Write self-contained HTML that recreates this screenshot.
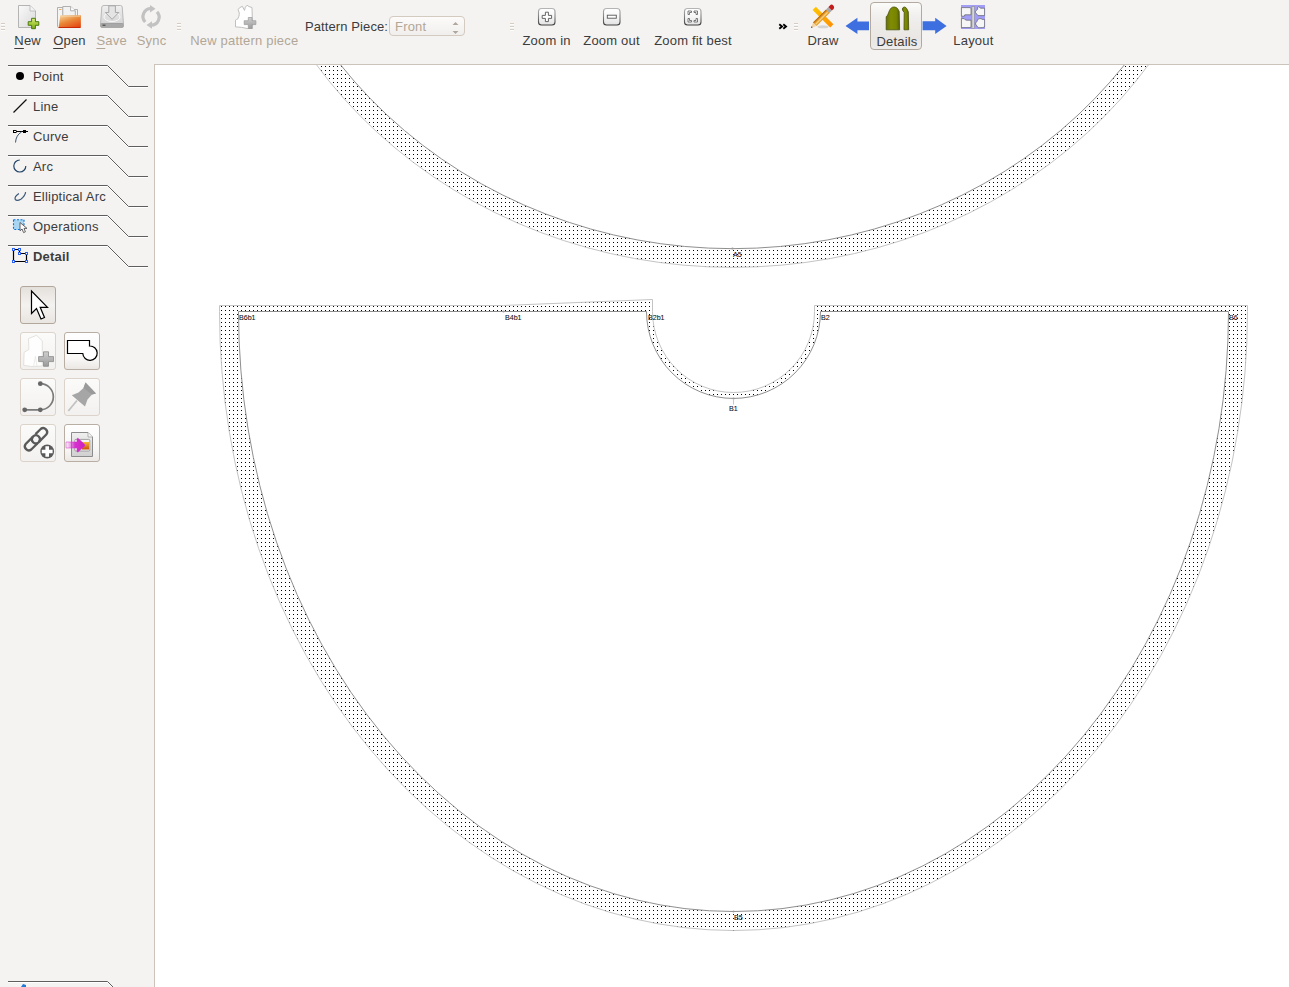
<!DOCTYPE html>
<html><head><meta charset="utf-8">
<style>
*{margin:0;padding:0;box-sizing:border-box}
html,body{width:1289px;height:987px;overflow:hidden;background:#f4f3f1;position:relative;font-family:"Liberation Sans",sans-serif;font-size:13px;color:#3c3c3c}
.a{position:absolute}
.t{position:absolute;white-space:nowrap;line-height:15px;height:15px;letter-spacing:0.2px}
.c{transform:translateX(-50%)}
.dis{color:#b2a696}
.u{text-decoration:underline;text-decoration-thickness:1px;text-underline-offset:3px}
.hd{position:absolute;width:4px;height:8px;background:repeating-linear-gradient(to bottom,#d5ccc2 0 1px,#fdfdfc 1px 2px,transparent 2px 3px)}
.tab{position:absolute;left:8px;width:141px;height:22px}
.tb{position:absolute;width:36px;height:38px;border:1px solid #c3b8ad;border-radius:3px;background:linear-gradient(#fcfcfb,#f1efed)}
</style></head><body>

<!-- canvas -->
<div class="a" style="left:154px;top:64px;width:1135px;height:923px;background:#fff;border-left:1px solid #ccc3ba;border-top:1px solid #ccc3ba"></div>
<svg class="a" style="left:155px;top:65px" width="1134" height="922" viewBox="155 65 1134 922">
<defs>
<pattern id="dots" patternUnits="userSpaceOnUse" x="0" y="0" width="4" height="4"><rect x="1" y="2" width="1" height="1" fill="#000"/></pattern>
</defs>
<g id="pieceA">
<path d="M230.2,-193.5 a502.3,460.7 0 1 0 1004.6,0 a502.3,460.7 0 1 0 -1004.6,0 Z M244,-207.5 a488.5,456 0 1 0 977,0 a488.5,456 0 1 0 -977,0 Z" fill="url(#dots)" fill-rule="evenodd" shape-rendering="crispEdges"/>
<path d="M230.2,-193.5 a502.3,460.7 0 1 0 1004.6,0 a502.3,460.7 0 1 0 -1004.6,0 Z" fill="none" stroke="#c4c4c4" stroke-width="1"/>
<path d="M244,-207.5 a488.5,456 0 1 0 977,0 a488.5,456 0 1 0 -977,0 Z" fill="none" stroke="#8f8f8f" stroke-width="1"/>
</g>
<g id="pieceB">
<path d="M219.5,305.5 L503.5,305.5 L652.5,299.5 L652.5,311.5 A81,81 0 0 0 814.5,311.5 L814.5,305.5 L1247.5,305.5 L1247.5,311.5 A514,619 0 0 1 733.5,930.5 A514,619 0 0 1 219.5,311.5 Z" fill="url(#dots)" shape-rendering="crispEdges"/>
<path d="M238.5,311.5 L646.5,311.5 A87,87 0 0 0 820.5,311.5 L1228.5,311.5 A495,600 0 0 1 733.5,911.5 A495,600 0 0 1 238.5,311.5 Z" fill="#fff" shape-rendering="crispEdges"/>
<path d="M219.5,305.5 L503.5,305.5 L652.5,299.5 L652.5,311.5 A81,81 0 0 0 814.5,311.5 L814.5,305.5 L1247.5,305.5 L1247.5,311.5 A514,619 0 0 1 733.5,930.5 A514,619 0 0 1 219.5,311.5 Z" fill="none" stroke="#c4c4c4" stroke-width="1"/>
<path d="M238.5,311.5 L646.5,311.5 A87,87 0 0 0 820.5,311.5 L1228.5,311.5 A495,600 0 0 1 733.5,911.5 A495,600 0 0 1 238.5,311.5 Z" fill="none" stroke="#8f8f8f" stroke-width="1"/>
</g>
<circle cx="732.5" cy="248.5" r="1.1" fill="#9a9a9a"/><circle cx="733.5" cy="911.5" r="1.1" fill="#9a9a9a"/><circle cx="733.5" cy="398.5" r="1.1" fill="#9a9a9a"/><circle cx="503.5" cy="311.5" r="1.1" fill="#9a9a9a"/>
<path d="M733.5,399 V404.5" stroke="#c8c8c8" stroke-width="1"/>
<g font-family="Liberation Sans" font-size="7.1" fill="#111" stroke="#111" stroke-width="0.08">
<text x="733" y="257">A5</text>
<text x="239" y="320">B6b1</text>
<text x="505" y="320">B4b1</text>
<text x="648" y="320">B2b1</text>
<text x="821" y="320">B2</text>
<text x="1229" y="320">B6</text>
<text x="729" y="411">B1</text>
<text x="734" y="920">B5</text>
</g>
</svg>

<!-- toolbar -->
<div class="hd" style="left:1px;top:23px"></div>
<div class="t c" style="left:27.6px;top:33px"><span class="u">N</span>ew</div>
<div class="t c" style="left:69.5px;top:33px"><span class="u">O</span>pen</div>
<div class="t c dis" style="left:111.6px;top:33px"><span class="u">S</span>ave</div>
<div class="t c dis" style="left:151.5px;top:33px">Sync</div>
<div class="hd" style="left:177px;top:23px"></div>
<div class="t c dis" style="left:244.3px;top:33px">New pattern piece</div>
<div class="t" style="left:305px;top:19px;letter-spacing:0.1px">Pattern Piece:</div>
<div class="a" style="left:389px;top:16px;width:76px;height:20px;border:1px solid #d3cac0;border-radius:4px;background:linear-gradient(#fcfbfa,#f1efed)"></div>
<div class="t dis" style="left:395px;top:19px">Front</div>
<div class="hd" style="left:510px;top:23px"></div>
<div class="t c" style="left:546.6px;top:33px">Zoom in</div>
<div class="t c" style="left:611.5px;top:33px">Zoom out</div>
<div class="t c" style="left:693px;top:33px">Zoom fit best</div>
<div class="hd" style="left:794px;top:23px"></div>
<div class="a" style="left:870px;top:2px;width:52px;height:48px;border:1px solid #b2a99f;border-radius:4px;background:linear-gradient(#fbfbfa,#f1efed 30%,#e9e6e3 75%,#efedeb)"></div>
<div class="t c" style="left:823px;top:33px">Draw</div>
<div class="t c" style="left:897px;top:34px">Details</div>
<div class="t c" style="left:973.4px;top:33px">Layout</div>


<!-- toolbar icons -->
<svg class="a" style="left:0;top:0" width="1000" height="52">
<defs>
<linearGradient id="docg" x1="0" y1="0" x2="1" y2="1"><stop offset="0" stop-color="#fafafa"/><stop offset="1" stop-color="#d9d9d9"/></linearGradient>
<linearGradient id="grn" x1="0" y1="0" x2="0" y2="1"><stop offset="0" stop-color="#e0f090"/><stop offset="0.5" stop-color="#a8cc3c"/><stop offset="1" stop-color="#78a818"/></linearGradient>
<linearGradient id="org" x1="0" y1="0" x2="0" y2="1"><stop offset="0" stop-color="#f5b070"/><stop offset="0.5" stop-color="#ec7530"/><stop offset="1" stop-color="#dd4a0c"/></linearGradient>
<linearGradient id="drv" x1="0" y1="0" x2="0" y2="1"><stop offset="0" stop-color="#f0f0f0"/><stop offset="1" stop-color="#d4d4d4"/></linearGradient>
<linearGradient id="zb" x1="0" y1="0" x2="0" y2="1"><stop offset="0" stop-color="#ffffff"/><stop offset="0.5" stop-color="#f6f6f6"/><stop offset="1" stop-color="#e2e2e2"/></linearGradient><linearGradient id="zs" x1="0" y1="0" x2="0" y2="1"><stop offset="0" stop-color="#b4b4b4"/><stop offset="0.5" stop-color="#808080"/><stop offset="1" stop-color="#404040"/></linearGradient>
</defs>
<!-- New -->
<path d="M18.5,5.5 H30 L35.5,11 V27.5 H18.5 Z" fill="url(#docg)" stroke="#b4b4b4" stroke-width="1"/>
<path d="M30,5.5 V11 H35.5" fill="#f4f4f4" stroke="#b5b5b5" stroke-width="0.8"/>
<path d="M31.6,18.3 h3.8 v3.4 h3.4 v3.6 h-3.4 v3.4 h-3.8 v-3.4 h-3.4 v-3.6 h3.4 Z" fill="url(#grn)" stroke="#4a7a0e" stroke-width="1" stroke-linejoin="round"/>
<!-- Open -->
<defs><linearGradient id="org2" x1="0.2" y1="0" x2="0.8" y2="1"><stop offset="0" stop-color="#f5cf95"/><stop offset="0.45" stop-color="#e98a3a"/><stop offset="1" stop-color="#e44510"/></linearGradient></defs>
<path d="M57.5,7.5 H63 V27.5 H58.5 Q57.5,27.5 57.5,26.5 Z" fill="#f4f4f4" stroke="#a8a8a8" stroke-width="0.9"/>
<rect x="59" y="9" width="2.5" height="0.9" fill="#f0a848"/>
<path d="M72,9.5 H77.5 V16 H72 Z" fill="#f4f4f4" stroke="#a8a8a8" stroke-width="0.9"/>
<path d="M62.8,6.5 H70.6 L75.3,10.8 V16 H62.8 Z" fill="#f2f2f2" stroke="#a8a8a8" stroke-width="0.9"/>
<path d="M70.6,6.5 V10.8 H75.3" fill="#fff" stroke="#a8a8a8" stroke-width="0.9"/>
<path d="M60.3,15.2 H80.9 V26.8 Q80.9,27.8 79.9,27.8 H58.6 Z" fill="url(#org2)"/>
<path d="M58.9,27 H80.5 V27.9 H58.6 Z" fill="#c82a08"/>
<path d="M61.2,16.2 H80" stroke="#f8dcb8" stroke-width="0.8" opacity="0.8"/>
<!-- Save -->
<path d="M104,5.5 H120.5 Q122,5.5 122.2,7 L123.5,24 H100.5 L101.8,7 Q102,5.5 104,5.5 Z" fill="url(#drv)" stroke="#b9b9b9" stroke-width="1"/><ellipse cx="112" cy="17" rx="8" ry="4.5" fill="none" stroke="#f8f8f8" stroke-width="1"/>
<rect x="100.5" y="23.5" width="23" height="4" rx="1.5" fill="#a8a8a8" stroke="#909090" stroke-width="0.6"/>
<rect x="102.5" y="24.5" width="3" height="1.5" fill="#5a5a5a"/>
<path d="M108.8,5.8 H115.4 V12.5 H118.8 L112.1,19.3 L105.4,12.5 H108.8 Z" fill="#e4e4e4" stroke="#a2a2a2" stroke-width="0.9"/>
<!-- Sync -->
<g fill="none" stroke="#c2c2c2" stroke-width="3.2">
<path d="M145.2,22 A8,8 0 0 1 151,8.5"/>
<path d="M157,11.8 A8,8 0 0 1 151.2,25.2"/>
</g>
<path d="M150,5 L155.5,8.8 L150,12.5 Z" fill="#c2c2c2"/>
<path d="M152,21.3 L146.5,25 L152,28.7 Z" fill="#c2c2c2"/>
<!-- New pattern piece -->
<path d="M238,9.4 Q240,7.2 242.3,6.3 L244.5,10.4 Q245,6.5 247.1,5.2 L249,6.6 L252,7.5 L252.6,28.5 L247.1,28.5 Q242,27 235.5,26.9 L235.5,20.1 Q236.5,19.2 237.7,19.1 Q239.5,16 239.3,13 Z" fill="#fff" stroke="#b9b9b9" stroke-width="0.9" stroke-linejoin="round"/>
<path d="M248.3,17.5 H252 V20.7 H255.9 V24.6 H252 V28.5 H248.3 V24.6 H244.2 V20.7 H248.3 Z" fill="url(#gp2)" stroke="#9a9a9a" stroke-width="0.7"/>
<defs><linearGradient id="gp2" x1="0" y1="0" x2="0" y2="1"><stop offset="0" stop-color="#d0d0d0"/><stop offset="1" stop-color="#9c9c9c"/></linearGradient></defs>
<!-- combo arrows -->
<path d="M452.5,25 L455.5,22 L458.5,25 Z M452.5,31 L455.5,34 L458.5,31 Z" fill="#b0a89e"/>
<!-- zoom in -->
<rect x="538.5" y="8.5" width="16.5" height="16.5" rx="3" fill="url(#zb)" stroke="url(#zs)" stroke-width="1.1"/>
<path d="M545.4,12.2 h3 v3.2 h3.2 v3 h-3.2 v3.2 h-3 v-3.2 h-3.2 v-3 h3.2 Z" fill="#fff" stroke="#555" stroke-width="0.9"/>
<!-- zoom out -->
<rect x="603.5" y="8.5" width="16.5" height="16.5" rx="3" fill="url(#zb)" stroke="url(#zs)" stroke-width="1.1"/>
<rect x="607.3" y="15.2" width="9" height="3" fill="#fff" stroke="#555" stroke-width="0.9"/>
<!-- zoom fit -->
<rect x="684.5" y="8.5" width="16.5" height="16.5" rx="3" fill="url(#zb)" stroke="url(#zs)" stroke-width="1.1"/>
<g fill="none" stroke="#5a5a5a" stroke-width="1.1">
<path d="M688,14.5 V11 H691.5 V12.5 H689.5 V14.5 Z M697.5,14.5 V11 H694 V12.5 H696 V14.5 Z M697.5,18.5 V22 H694 V20.5 H696 V18.5 Z M688,18.5 V22 H691.5 V20.5 H689.5 V18.5 Z" fill="#fff" stroke-width="0.8"/>
</g>
<!-- >> -->
<path d="M779.3,24.3 L782,26.5 L779.3,28.7 M783.3,24.3 L786,26.5 L783.3,28.7" fill="none" stroke="#000" stroke-width="1.9"/>
<!-- Draw -->
<defs><linearGradient id="rul" x1="0" y1="0" x2="1" y2="1"><stop offset="0" stop-color="#ffc800"/><stop offset="1" stop-color="#ff8c00"/></linearGradient></defs>
<ellipse cx="823" cy="26.8" rx="5.5" ry="1.5" fill="#000" opacity="0.13"/>
<path d="M815.8,6.7 L812.6,9.9 L830.2,27.4 L833.4,24.2 Z" fill="url(#rul)"/>
<g transform="translate(811,28) scale(0.94) translate(-811,-28)"><path d="M816.84,25.84 L813.16,22.16 L827.06,8.26 L830.74,11.94 Z" fill="#e39a2a"/>
<path d="M815.5,23.5 L828.2,10.8 L829.2,11.8 L816.5,24.5 Z" fill="#f7d27a"/>
<path d="M813.16,22.16 L827.06,8.26 L827.8,9 L813.9,22.9 Z" fill="#b86a10"/>
<path d="M811,28 L816.84,25.84 L813.16,22.16 Z" fill="#f2d3a6"/>
<path d="M811,28 L812.8,27.3 L811.7,26.2 Z" fill="#222"/>
<path d="M827.06,8.26 L830.74,11.94 L833.24,9.44 L829.56,5.76 Z" fill="#a8a8a8"/>
<path d="M829.56,5.76 L833.24,9.44 L835.2,7.5 Q836.5,5.5 834.5,3.7 Q832.6,2 830.9,4.4 Z" fill="#c41c1c"/></g>
<!-- arrows -->
<path d="M845.5,26 L857.4,17.8 V21.6 H869 V30.2 H857.4 V34 Z" fill="#3e6fe0"/>
<path d="M946.6,26 L935.2,17.8 V21.3 H922.6 V30.2 H935.2 V34 Z" fill="#3e6fe0"/>
<!-- Details icon -->
<defs><linearGradient id="olv" x1="0" x2="1"><stop offset="0" stop-color="#66700a"/><stop offset="0.35" stop-color="#808c02"/><stop offset="0.75" stop-color="#778400"/><stop offset="1" stop-color="#56600a"/></linearGradient></defs>
<path d="M886.2,29.8 V16.8 Q887.8,15.5 888.5,13 Q889.2,10 891.2,8 Q892.5,6.8 894.5,7 Q897,7.2 898.2,9.5 L899.2,11.5 L899.6,29.8 Z" fill="url(#olv)" stroke="#46500a" stroke-width="0.8"/>
<path d="M904,29.8 L904.2,12.5 Q902.3,10.5 902.3,9 Q902.8,7 904.5,7 Q906,7.2 906.8,8.8 L908.3,11.8 L908.7,29.8 Z" fill="url(#olv)" stroke="#46500a" stroke-width="0.8"/>
<!-- Layout icon -->
<rect x="961" y="5" width="24" height="24" fill="#a29df7"/>
<g fill="#f6f6f6" stroke="#5e5e66" stroke-width="0.7" stroke-linejoin="round">
<path d="M961.4,7.6 H970.3 L971,8.8 V14.8 H964.8 L964.3,16.2 H961.4 Z"/>
<path d="M961.4,18.6 H964.2 L965.5,20 L966.8,20.2 H971 V26.2 L970.4,27.6 H961.4 Z"/>
<path d="M977.6,7.4 Q978.5,6.2 979.5,7.2 L980.4,8.2 H984.6 V15.6 H978 Q976.6,14 975.4,12.3 Q975.2,11.5 976.3,10.6 L977.6,9.2 Z"/>
<path d="M977.6,19.6 Q979,18.4 981,18.6 L982.2,19.4 H984.6 V27 Q983,27.8 980,27.7 H978.2 Q976.8,25.8 975.4,24 Q976,22.2 977,21.4 Z"/>
</g>
<rect x="972" y="6.4" width="2.2" height="22" fill="#dedede" stroke="#8a8a8a" stroke-width="0.6"/>
</svg>

<!-- left panel tabs -->
<svg class="a" style="left:0;top:0" width="154" height="987">
<path d="M8,66.5 H107.5 L128.5,87.5 H148" fill="none" stroke="#fff" stroke-width="1"/>
<path d="M8,65.5 H107.5 L128.5,86.5 H148" fill="none" stroke="#5e5e5e" stroke-width="1"/>
<path d="M8,96.5 H107.5 L128.5,117.5 H148" fill="none" stroke="#fff" stroke-width="1"/>
<path d="M8,95.5 H107.5 L128.5,116.5 H148" fill="none" stroke="#5e5e5e" stroke-width="1"/>
<path d="M8,126.5 H107.5 L128.5,147.5 H148" fill="none" stroke="#fff" stroke-width="1"/>
<path d="M8,125.5 H107.5 L128.5,146.5 H148" fill="none" stroke="#5e5e5e" stroke-width="1"/>
<path d="M8,156.5 H107.5 L128.5,177.5 H148" fill="none" stroke="#fff" stroke-width="1"/>
<path d="M8,155.5 H107.5 L128.5,176.5 H148" fill="none" stroke="#5e5e5e" stroke-width="1"/>
<path d="M8,186.5 H107.5 L128.5,207.5 H148" fill="none" stroke="#fff" stroke-width="1"/>
<path d="M8,185.5 H107.5 L128.5,206.5 H148" fill="none" stroke="#5e5e5e" stroke-width="1"/>
<path d="M8,216.5 H107.5 L128.5,237.5 H148" fill="none" stroke="#fff" stroke-width="1"/>
<path d="M8,215.5 H107.5 L128.5,236.5 H148" fill="none" stroke="#5e5e5e" stroke-width="1"/>
<path d="M8,246.5 H107.5 L128.5,267.5 H148" fill="none" stroke="#fff" stroke-width="1"/>
<path d="M8,245.5 H107.5 L128.5,266.5 H148" fill="none" stroke="#5e5e5e" stroke-width="1"/>
<path d="M8,982.5 H107.5 L128.5,1003.5 H148" fill="none" stroke="#fff" stroke-width="1"/>
<path d="M8,981.5 H107.5 L128.5,1002.5 H148" fill="none" stroke="#5e5e5e" stroke-width="1"/>
<circle cx="20" cy="76" r="4" fill="#000"/>
<path d="M13.5,112.5 L26.5,99.5" stroke="#111" stroke-width="1.3"/>
<rect x="13.5" y="130.5" width="2.5" height="2" fill="#fff" stroke="#000" stroke-width="1"/>
<path d="M16,131.5 H28" stroke="#000" stroke-width="1"/><rect x="23" y="130" width="3" height="3" fill="#000"/>
<path d="M21.5,132 Q16,135 15.5,142.5" fill="none" stroke="#3d5670" stroke-width="1"/>
<path d="M19.8,160 A6,6 0 1 0 25.8,166" fill="none" stroke="#234567" stroke-width="1.2"/>
<path d="M18.9,193.6 Q14.2,196.8 15.2,199.4 Q16.8,201.6 20.8,199.2 Q25,196.4 25.6,192.2" fill="none" stroke="#3a5878" stroke-width="1.2"/>
<rect x="13.5" y="219.7" width="10.5" height="9.8" fill="#a8d6f2" stroke="#0a74de" stroke-width="1.1" stroke-dasharray="2,1.5"/>
<path d="M20,222.5 L20,230.8 L22,229 L23.6,232.6 L25.4,231.8 L24,228.4 L27,228.4 Z" fill="#fafafa" stroke="#555" stroke-width="0.9" stroke-linejoin="round"/>
<path d="M13.5,249.5 H19.5 V253.5 H26.5 V261.5 H13.5 Z" fill="none" stroke="#000" stroke-width="1.2"/><rect x="12.5" y="248.5" width="2" height="2" fill="#fff" stroke="#2a62f5" stroke-width="1"/><rect x="18.5" y="248.5" width="2" height="2" fill="#fff" stroke="#2a62f5" stroke-width="1"/><rect x="18.5" y="252.5" width="2" height="2" fill="#fff" stroke="#2a62f5" stroke-width="1"/><rect x="25.5" y="252.5" width="2" height="2" fill="#fff" stroke="#2a62f5" stroke-width="1"/><rect x="25.5" y="260.5" width="2" height="2" fill="#fff" stroke="#2a62f5" stroke-width="1"/><rect x="12.5" y="260.5" width="2" height="2" fill="#fff" stroke="#2a62f5" stroke-width="1"/>






<path d="M21,987 L23,984 L26,985 L26,987 Z" fill="#1c7ad8"/>
</svg>
<div class="t" style="left:33px;top:69px">Point</div><div class="t" style="left:33px;top:99px">Line</div><div class="t" style="left:33px;top:129px">Curve</div><div class="t" style="left:33px;top:159px">Arc</div><div class="t" style="left:33px;top:189px">Elliptical Arc</div><div class="t" style="left:33px;top:219px">Operations</div><div class="t" style="left:33px;top:249px;font-weight:bold">Detail</div>

<div class="tb" style="left:20px;top:286px;background:linear-gradient(#e4e0dc,#f4f2f0 50%,#e9e5e1);border-color:#b3a79b"></div>
<svg class="a" style="left:20px;top:286px" width="36" height="37"><path d="M11.5,5 L11.5,27.5 L16.5,22.5 L21,33 L24.5,31.5 L20.2,21.3 L27.5,21.3 Z" fill="#fff" stroke="#000" stroke-width="1.2" stroke-linejoin="miter"/></svg>

<div class="tb" style="left:20px;top:332px;background:linear-gradient(#fbfbfa,#f3f1ef);border-color:#dcd3ca"></div>
<svg class="a" style="left:20px;top:332px" width="36" height="37">
<defs><linearGradient id="gp" x1="0" y1="0" x2="0" y2="1"><stop offset="0" stop-color="#cfcfcf"/><stop offset="1" stop-color="#9a9a9a"/></linearGradient></defs>
<path d="M8.5,6.5 L16.6,3.3 L22.3,8.9 L22.3,34 L11.8,34.5 L3.7,33.3 L4.1,20.3 L8.9,17.5 Z" fill="#fefefe" stroke="#dddad6" stroke-width="0.8"/>
<path d="M15.4,24.3 L13.6,34.3 M15.4,24.3 L17,34.3" stroke="#e2dfdb" stroke-width="0.6" fill="none"/>
<path d="M23.5,19.8 H28.5 V24.6 H33.5 V29.6 H28.5 V34.3 H23.5 V29.6 H18.6 V24.6 H23.5 Z" fill="url(#gp)" stroke="#8a8a8a" stroke-width="0.8" stroke-linejoin="round"/>
</svg>

<div class="tb" style="left:64px;top:332px;background:linear-gradient(#fefefe,#f9f8f7 70%,#ebe7e3);border-color:#b9aea3"></div>
<svg class="a" style="left:64px;top:332px" width="36" height="37"><path d="M3.5,8.5 H25.5 V14 A7.2,7.2 0 1 1 18.8,21.5 H3.5 Z" fill="#fff" stroke="#000" stroke-width="1.2"/></svg>

<div class="tb" style="left:20px;top:378px;background:linear-gradient(#fbfbfa,#f3f1ef);border-color:#dcd3ca"></div>
<svg class="a" style="left:20px;top:378px" width="36" height="37">
<path d="M4.7,31.8 H20.3 M20.3,31.8 A13,13 0 0 0 20.3,5.7" fill="none" stroke="#7b7b7b" stroke-width="1.7"/>
<circle cx="20.3" cy="5.7" r="2.4" fill="#666"/><circle cx="20.3" cy="31.8" r="2.4" fill="#666"/><circle cx="4.7" cy="31.8" r="2.4" fill="#666"/>
</svg>

<div class="tb" style="left:64px;top:378px;background:linear-gradient(#fbfbfa,#f3f1ef);border-color:#dcd3ca"></div>
<svg class="a" style="left:64px;top:378px" width="36" height="37">
<path d="M21.5,4.5 L32,15.5 L28,16.5 L23.5,21.5 L21,28.5 L7.8,17.3 L14.5,14.5 L19.5,10 Z" fill="#a6a6a6"/>
<path d="M21.5,4.5 L32,15.5 L28,16.5 L19.5,10 Z" fill="#9a9a9a"/>
<path d="M13,22.5 L4.3,33" stroke="#c2c2c2" stroke-width="1.8"/>
</svg>

<div class="tb" style="left:20px;top:424px;background:linear-gradient(#fbfbfa,#f3f1ef);border-color:#dcd3ca"></div>
<svg class="a" style="left:20px;top:424px" width="36" height="37">
<g fill="none" stroke="#5a5a5a" stroke-width="2.3">
<path d="M15.5,10.1 L20.7,5 A4,4 0 0 1 26.3,10.6 L18.3,18.6 A4,4 0 0 1 12.7,13"/>
<path d="M17.6,19.2 L11.3,25.5 A4,4 0 0 1 5.7,19.9 L13.5,12.1 A4,4 0 0 1 19.1,17.7"/>
</g>
<circle cx="27.2" cy="27.5" r="6.9" fill="#5a5a5a"/>
<path d="M25.4,22.2 h3.6 v3.5 h3.6 v3.6 h-3.6 v3.5 h-3.6 v-3.5 h-3.6 v-3.6 h3.6 Z" fill="#fff"/>
</svg>

<div class="tb" style="left:64px;top:424px;background:linear-gradient(#fefefe,#f7f6f5 70%,#ece8e4);border-color:#b9aea3"></div>
<svg class="a" style="left:64px;top:424px" width="36" height="37">
<defs><linearGradient id="mg" x1="0" x2="1"><stop offset="0" stop-color="#e040d8" stop-opacity="0"/><stop offset="0.5" stop-color="#d830d0"/><stop offset="1" stop-color="#cc20c0"/></linearGradient>
<linearGradient id="dg" x1="0" y1="0" x2="0" y2="1"><stop offset="0" stop-color="#f0f0f0"/><stop offset="1" stop-color="#d0d0d0"/></linearGradient>
<linearGradient id="og" x1="0" y1="0" x2="0" y2="1"><stop offset="0" stop-color="#f8b838"/><stop offset="1" stop-color="#c8500c"/></linearGradient></defs>
<path d="M7.5,8.5 H24 L28.5,13 V32.5 H7.5 Z" fill="url(#dg)" stroke="#8c8c8c" stroke-width="1"/>
<path d="M24,8.5 V13 H28.5" fill="#f4f4f4" stroke="#9a9a9a" stroke-width="0.7"/>
<rect x="10.8" y="15.4" width="15" height="11.6" rx="1" fill="#f4f4f4" stroke="#8f8f8f" stroke-width="0.8"/>
<rect x="18" y="18" width="7" height="7.5" fill="url(#og)"/>
<path d="M2,18 H13 V15.5 Q13,13.4 14.6,14.8 L20.5,20.2 Q21.5,21.2 20.5,22.2 L14.6,27.6 Q13,29 13,26.8 V24 H2 Z" fill="url(#mg)" stroke="#d030c8" stroke-width="0.5"/>
</svg>

</body></html>
